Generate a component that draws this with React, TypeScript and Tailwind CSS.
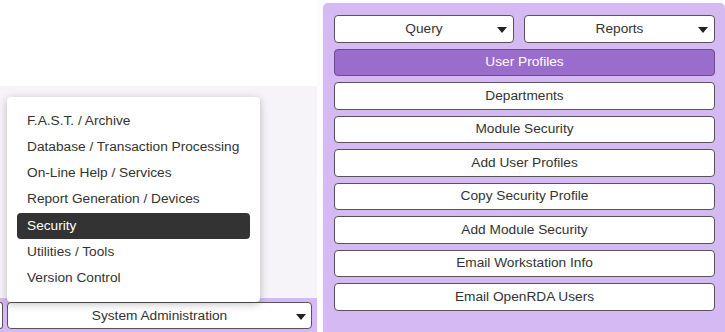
import React from "react";

const Caret = () => (
  <svg width="10" height="6" viewBox="0 0 10 6" className="block">
    <path d="M0 0 L10 0 L5 6 Z" fill="#222" />
  </svg>
);

const menuItems = [
  "F.A.S.T. / Archive",
  "Database / Transaction Processing",
  "On-Line Help / Services",
  "Report Generation / Devices",
  "Security",
  "Utilities / Tools",
  "Version Control",
];

const buttons = [
  "Departments",
  "Module Security",
  "Add User Profiles",
  "Copy Security Profile",
  "Add Module Security",
  "Email Workstation Info",
  "Email OpenRDA Users",
];

export default function App() {
  return (
    <div
      className="relative flex w-[725px] h-[332px] overflow-hidden bg-[#fdfcfe] text-[13.7px] text-[#333] whitespace-nowrap"
      style={{ fontFamily: '"Liberation Sans", Arial, sans-serif' }}
    >
      {/* Left column */}
      <div className="flex flex-col w-[317px] h-full">
        <div className="h-[86px] bg-white" />
        <div className="flex-1 bg-[#f6f4f8]" />
        <div className="h-[34px] bg-[#d4b9f2] flex items-start pt-[4px] gap-[4px]">
          <div className="h-[27px] w-[3px] shrink-0 border border-l-0 border-[#555] rounded-r-[4px] bg-white" />
          <div className="relative h-[27px] w-[305px] shrink-0 border border-[#555] rounded-[4px] bg-white flex items-center justify-center pt-[1px]">
            <span>System Administration</span>
            <span className="absolute right-[5px] top-[11px]">
              <Caret />
            </span>
          </div>
        </div>
      </div>

      {/* Right panel */}
      <div className="ml-[6px] mt-[3px] w-[402px] bg-[#d4b9f2] rounded-t-[5px] pl-[11px] pr-[10px] pt-[12px] flex flex-col gap-[6px]">
        <div className="flex gap-[10px]">
          <div className="relative h-[27.5px] w-[180px] border border-[#555] rounded-[4px] bg-white flex items-center justify-center pt-[1px]">
            <span>Query</span>
            <span className="absolute right-[6px] top-[11px]">
              <Caret />
            </span>
          </div>
          <div className="relative h-[27.5px] flex-1 border border-[#555] rounded-[4px] bg-white flex items-center justify-center pt-[1px]">
            <span>Reports</span>
            <span className="absolute right-[6px] top-[11px]">
              <Caret />
            </span>
          </div>
        </div>
        <div className="h-[27.5px] border border-[#6a4a90] rounded-[4px] bg-[#9a6ccb] text-white flex items-center justify-center pt-[1px]">
          User Profiles
        </div>
        {buttons.map((b) => (
          <div
            key={b}
            className="h-[27.5px] border border-[#555] rounded-[4px] bg-white flex items-center justify-center pt-[1px]"
          >
            {b}
          </div>
        ))}
      </div>

      {/* Dropdown menu */}
      <div className="absolute left-[7px] top-[97px] w-[253px] h-[205px] bg-white rounded-[4px] shadow-[0_2px_8px_rgba(0,0,0,0.25)] px-[10px] pt-[11px]">
        {menuItems.map((m) => (
          <div
            key={m}
            className={
              m === "Security"
                ? "h-[26.2px] px-[10px] flex items-center rounded-[4px] bg-[#333] text-white"
                : "h-[26.2px] px-[10px] flex items-center"
            }
          >
            {m}
          </div>
        ))}
      </div>
    </div>
  );
}
